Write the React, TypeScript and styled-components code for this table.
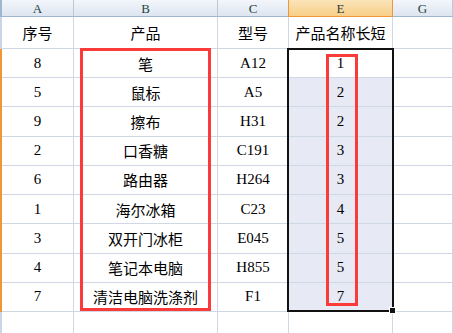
import React from "react";
import styled, { createGlobalStyle } from "styled-components";

const GlobalStyle = createGlobalStyle`
  html, body {
    margin: 0;
    padding: 0;
    background: #ffffff;
    overflow: hidden;
  }
`;

const rows = [
  { no: "8", name: "笔", model: "A12", len: "1" },
  { no: "5", name: "鼠标", model: "A5", len: "2" },
  { no: "9", name: "擦布", model: "H31", len: "2" },
  { no: "2", name: "口香糖", model: "C191", len: "3" },
  { no: "6", name: "路由器", model: "H264", len: "3" },
  { no: "1", name: "海尔冰箱", model: "C23", len: "4" },
  { no: "3", name: "双开门冰柜", model: "E045", len: "5" },
  { no: "4", name: "笔记本电脑", model: "H855", len: "5" },
  { no: "7", name: "清洁电脑洗涤剂", model: "F1", len: "7" },
];

const columns = ["A", "B", "C", "E", "G"];

const App = () => {
  return (
    <>
      <GlobalStyle />
      <Sheet>
        <Stub />
        {columns.map((c) => (
          <HeadCell key={c} $active={c === "E"}>
            {c}
          </HeadCell>
        ))}

        <Stub $light />
        <Cell>序号</Cell>
        <Cell>产品</Cell>
        <Cell>型号</Cell>
        <Cell>产品名称长短</Cell>
        <Cell />

        {rows.map((r, i) => (
          <React.Fragment key={i}>
            <Stub $selected />
            <Cell>{r.no}</Cell>
            <Cell>{r.name}</Cell>
            <Cell>{r.model}</Cell>
            <Cell $shaded={i > 0}>{r.len}</Cell>
            <Cell />
          </React.Fragment>
        ))}

        <Stub $light />
        <Cell />
        <Cell />
        <Cell />
        <Cell />
        <Cell />

        <Selection>
          <FillHandle />
        </Selection>
        <NameMark />
        <LengthMark />
      </Sheet>
    </>
  );
};

const Sheet = styled.div`
  position: relative;
  display: grid;
  grid-template-columns: 2px 72px 144px 71px 104px 1fr;
  grid-template-rows: 17px 32px repeat(9, 29.22px) 40px;
  width: 453px;
  height: 333px;
  overflow: hidden;
  font-family: "Liberation Serif", "Noto Sans CJK SC", serif;
  font-size: 15px;
  color: #000000;
`;

const Stub = styled.div<{ $selected?: boolean; $light?: boolean }>`
  background: ${(p) =>
    p.$selected ? "#f29536" : p.$light ? "#c9d6e6" : "#9eb6ce"};
`;

const HeadCell = styled.div<{ $active?: boolean }>`
  display: flex;
  align-items: flex-end;
  justify-content: center;
  padding-bottom: 1px;
  box-sizing: border-box;
  font-family: "Liberation Serif", serif;
  font-size: 13px;
  line-height: 13px;
  color: #27413e;
  background: ${(p) =>
    p.$active
      ? "linear-gradient(#fbe4b9, #f8cf88)"
      : "linear-gradient(#f3f6fb, #dde5f0)"};
  border-right: 1px solid ${(p) => (p.$active ? "#f29536" : "#b9c9dd")};
  border-bottom: 1px solid ${(p) => (p.$active ? "#f29536" : "#9eb6ce")};
  box-shadow: ${(p) => (p.$active ? "-1px 0 0 #f29536" : "none")};
`;

const Cell = styled.div<{ $shaded?: boolean }>`
  display: flex;
  align-items: center;
  justify-content: center;
  box-sizing: border-box;
  white-space: nowrap;
  border-right: 1px solid #d0d7e5;
  border-bottom: 1px solid #d0d7e5;
  background: ${(p) => (p.$shaded ? "#e7e9f4" : "transparent")};
`;

const Selection = styled.div`
  position: absolute;
  grid-column: 5 / 6;
  grid-row: 3 / 12;
  top: -1px;
  left: -2px;
  right: -1px;
  bottom: 0;
  border: 2px solid #111111;
  pointer-events: none;
`;

const FillHandle = styled.div`
  position: absolute;
  right: -4px;
  bottom: -4px;
  width: 5px;
  height: 5px;
  background: #111111;
  border: 1px solid #ffffff;
`;

const Mark = styled.div`
  position: absolute;
  border: 3px solid #fb3a3a;
  pointer-events: none;
`;

const NameMark = styled(Mark)`
  grid-column: 3 / 4;
  grid-row: 3 / 12;
  top: -1px;
  left: 6px;
  right: 7px;
  bottom: 1px;
`;

const LengthMark = styled(Mark)`
  grid-column: 5 / 6;
  grid-row: 3 / 12;
  top: 5px;
  left: 37px;
  right: 35px;
  bottom: 6px;
`;

export default App;
